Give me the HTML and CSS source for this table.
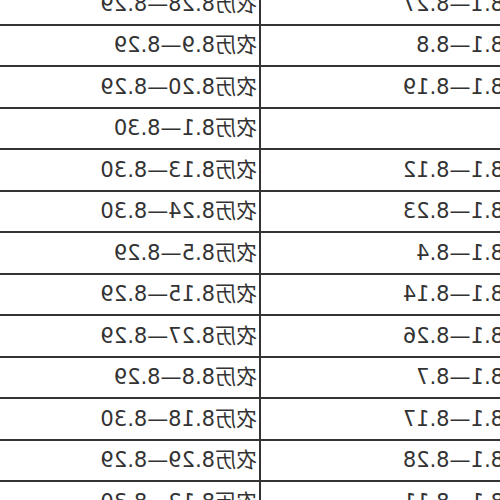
FILE: index.html
```html
<!DOCTYPE html>
<html lang="zh">
<head>
<meta charset="utf-8">
<link rel="stylesheet" href="styles.css">
</head>
<body>
<div class="page">
  <table class="dates">
    <tr><td>农历8.1—8.27</td><td>农历8.28—8.29</td></tr>
    <tr><td>农历8.1—8.8</td><td>农历8.9—8.29</td></tr>
    <tr><td>农历8.1—8.19</td><td>农历8.20—8.29</td></tr>
    <tr><td></td><td>农历8.1—8.30</td></tr>
    <tr><td>农历8.1—8.12</td><td>农历8.13—8.30</td></tr>
    <tr><td>农历8.1—8.23</td><td>农历8.24—8.30</td></tr>
    <tr><td>农历8.1—8.4</td><td>农历8.5—8.29</td></tr>
    <tr><td>农历8.1—8.14</td><td>农历8.15—8.29</td></tr>
    <tr><td>农历8.1—8.26</td><td>农历8.27—8.29</td></tr>
    <tr><td>农历8.1—8.7</td><td>农历8.8—8.29</td></tr>
    <tr><td>农历8.1—8.17</td><td>农历8.18—8.30</td></tr>
    <tr><td>农历8.1—8.28</td><td>农历8.29—8.29</td></tr>
    <tr><td>农历8.1—8.11</td><td>农历8.12—8.30</td></tr>
  </table>
</div>
</body>
</html>
```
FILE: styles.css
```css
html, body {
  margin: 0;
  padding: 0;
  background: #fff;
}
.page {
  width: 500px;
  height: 500px;
  overflow: hidden;
  transform: scaleX(-1);
  background: #fff;
}
.dates {
  border-collapse: collapse;
  margin-left: -50px;
  margin-top: -18px;
  table-layout: fixed;
  width: 600px;
  font-family: "DejaVu Sans", "Noto Sans CJK SC", sans-serif;
  font-size: 21px;
  color: #333;
}
.dates td {
  border: 2px solid #333;
  height: 39.5px;
  padding: 0 0 0 2px;
  white-space: nowrap;
  overflow: hidden;
  vertical-align: middle;
  line-height: 24px;
}
.dates td:first-child {
  width: 285px;
}
```
